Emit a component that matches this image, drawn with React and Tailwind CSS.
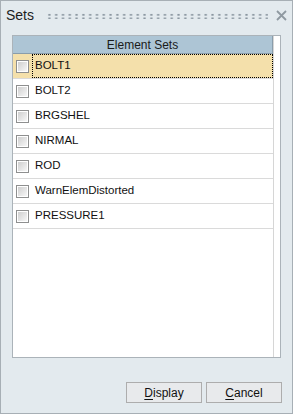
const sets = ['BOLT1', 'BOLT2', 'BRGSHEL', 'NIRMAL', 'ROD', 'WarnElemDistorted', 'PRESSURE1']

function Checkbox() {
  return (
    <span className="w-[13px] h-[13px] border border-[#8e8f8f] bg-white p-[1px] shrink-0">
      <span className="block w-full h-full bg-gradient-to-br from-[#cfcfcf] to-[#f7f7f7]" />
    </span>
  )
}

function Row({ name, selected }) {
  return (
    <div
      className={`h-[25px] flex items-center border-b border-[#dadada] ${selected ? 'bg-[#f4e0ab]' : 'bg-white'}`}
    >
      <div className="pl-[3px] pr-[3px] flex items-center">
        <Checkbox />
      </div>
      <div
        className={`flex-1 h-full flex items-center pl-[2px] ${selected ? 'border border-dotted border-black' : 'border border-transparent'}`}
      >
        <span className="text-[11.5px] text-[#111]">{name}</span>
      </div>
    </div>
  )
}

function Btn({ first, rest }) {
  return (
    <button className="w-[76px] h-[21px] border border-[#adadad] bg-[#e8eaec] text-[12px] text-[#111] flex items-center justify-center">
      <span className="underline underline-offset-2">{first}</span>
      {rest}
    </button>
  )
}

export default function App() {
  return (
    <div className="w-[293px] h-[414px] bg-[#e3eaee] border border-[#a7afb5] flex flex-col font-['Liberation_Sans',sans-serif]">
      <div className="h-[27px] flex items-center pl-[5px] pr-[4px] pt-[1px]">
        <span className="text-[14px] text-[#1d1d1d]">Sets</span>
        <div
          className="flex-1 h-[6px] ml-[12px] mr-[8px] mt-[1px] bg-[radial-gradient(circle,#8a96a0_1px,transparent_1.2px)] bg-[length:6.8px_3.6px]"
        />
        <svg width="11" height="11" viewBox="0 0 11 11" className="mr-[1px]">
          <path d="M1 1 L10 10 M10 1 L1 10" stroke="#8f99a1" strokeWidth="1.8" />
        </svg>
      </div>
      <div className="flex-1 flex flex-col pl-[11px] pr-[10px] pt-[7px]">
        <div className="h-[323px] mr-[1px] border border-[#abb3b9] bg-white flex">
          <div className="w-[261px] flex flex-col border-r border-[#d6d6d6]">
            <div className="h-[18px] bg-[#adc5d5] border-b border-r border-[#8a9dab] flex items-center justify-center">
              <span className="text-[12px] text-[#1a1a1a]">Element Sets</span>
            </div>
            {sets.map((s, i) => (
              <Row key={s} name={s} selected={i === 0} />
            ))}
          </div>
        </div>
        <div className="flex justify-end gap-[4px] mt-[24px]">
          <Btn first="D" rest="isplay" />
          <Btn first="C" rest="ancel" />
        </div>
      </div>
    </div>
  )
}
